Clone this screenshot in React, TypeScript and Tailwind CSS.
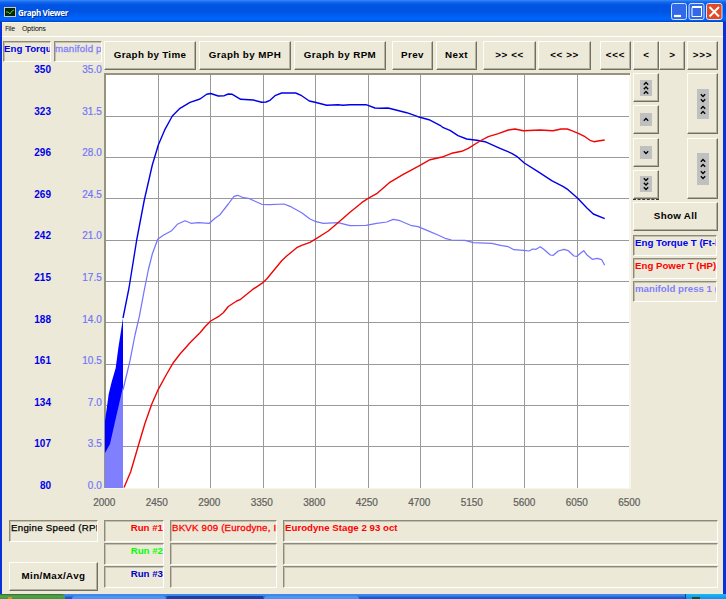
import type { ReactNode } from 'react'
import clsx from 'clsx'

const torqueAxis = ['350', '323', '296', '269', '242', '215', '188', '161', '134', '107', '80']
const pressureAxis = ['35.0', '31.5', '28.0', '24.5', '21.0', '17.5', '14.0', '10.5', '7.0', '3.5', '0.0']
const rpmAxis = ['2000', '2450', '2900', '3350', '3800', '4250', '4700', '5150', '5600', '6050', '6500']

const gridX = [158, 210, 263, 315, 368, 420, 472, 524, 577]
const gridY = [116, 157, 198, 240, 281, 322, 364, 405, 446]

const torque =
  '123,318 129,288 136.7,240 144.3,200 152.3,165 158.3,145 165,129.3 172.3,116 180,108.3 190,102.3 200,99 206.7,94.3 210.7,93.5 218.3,96 224.3,95.7 228.3,94 232.3,94.3 240.7,99.3 253.3,100 261.7,102.3 266,102 270,100.3 275,95.7 281.7,93 295.7,93 301.7,95.7 309.3,101 315,102.3 326.7,105.3 338,104.7 343,105.3 350,104.7 366,104.7 375,108 380.7,108.3 388,108 393,109.3 406.7,112.7 418,116.7 429,119.7 440,125.3 443.3,127.7 450,130.3 458,135.7 466.7,139 476.7,140.3 485,141.7 500,148.3 511.7,153.3 516.7,156.3 524.3,163 538,171.7 551.7,180.7 563.3,186.7 568,189.7 577.7,198.3 586.7,207.7 593.3,214 604.7,218.7'

const power =
  '124,487.5 130.7,471.7 138.3,445.7 145,423.3 151.7,404.3 158.3,389.3 166.7,374 173.3,362.7 180,354 190,342.7 200,332.7 205,326.7 210.7,321 218.3,316.7 223.3,312.7 228.3,306.5 236.7,301 240,299.7 252.3,289.7 263.3,282.3 266.7,279 273.3,271 281.7,260.7 286.7,256 296.7,247.7 301.7,245.3 310,242.3 315,239.3 328.3,231 338,222.7 350,212.3 361.7,202.7 367.7,198.7 376.7,193.7 389.3,182.7 403.3,174.3 420,165.3 430,159.7 443.3,156.7 451.7,153.3 461.7,151.3 468.3,148.3 480,141 488.3,136.7 498.3,133.7 508.3,130 515,129 523.3,130.7 540,130 553,130.7 561,129 567.3,129 571.7,130.7 578.3,133.3 585,136.7 590,140.3 594,141.7 598,141 604.7,140'

const pressure =
  '123,390 130,360.7 135,335 139.3,316.7 144.3,290 148.3,270 152.3,254 157.7,239.3 163.3,235.3 171.7,230.7 177.3,224.3 185,220.7 191,223.3 198.3,222.7 209.3,223.3 215,218.3 220,214.7 228.3,204 234,196.3 237.7,195.3 243.3,197.7 248.3,198.3 256.7,202 261.7,204.3 270,204.7 284,204 290,206.3 301.7,212.7 310,219 315,221.3 323.3,223.3 338,222.7 350,225.7 366,225.3 376.7,223.3 386.7,222 393.3,219.3 400,220.7 411.7,225.7 418,226.7 430,231.7 438,235 445,238.3 451.7,240 465,240.3 473.3,242.7 491.7,243.3 501.7,245.7 508.3,246.7 514,249.7 523.3,250.3 529,251 532.7,249 536,249.3 540.3,246.7 544.3,249.7 550.3,255 553.3,255.3 558.3,251 564,249.3 568.3,250.7 574,256 577,256.3 581,252.7 583.7,250.7 586.7,254.7 592.3,259.3 597.3,258.3 601.7,259.7 604.7,265.3'

function Button({ className, children }: { className: string; children: ReactNode }) {
  return (
    <button
      className={clsx(
        'flex shrink-0 items-center justify-center border border-t-[#fffef5] border-l-[#fffef5] border-r-[#716f64] border-b-[#716f64] bg-[#ece9d8] text-[9.8px] font-bold whitespace-nowrap text-black shadow-[inset_-1px_-1px_0_#b5b19f]',
        className,
      )}
    >
      {children}
    </button>
  )
}

function Field({ className, children }: { className: string; children?: ReactNode }) {
  return (
    <div
      className={clsx(
        'shrink-0 overflow-hidden border border-t-[#8d8a79] border-l-[#8d8a79] border-r-white border-b-white text-[9.7px] leading-[13px] whitespace-nowrap shadow-[inset_1px_1px_0_#c3bfad]',
        className,
      )}
    >
      {children}
    </div>
  )
}

// Stack of small chevrons on a grey plate
function Chevrons({ height, dirs }: { height: number; dirs: string }) {
  const gap = dirs.length === 4 ? 5 : 4.5
  // the four-chevron plates keep a wider gap between the two pairs
  const split = dirs.length === 4 ? 2 : 0
  const top = height / 2 - ((dirs.length - 1) * gap + split) / 2
  return (
    <svg width="12" height={height} className="bg-[#c0c0c0]" fill="none" stroke="black" strokeWidth="1.3">
      {dirs.split('').map((dir, i) => {
        const y = top + i * gap + (i > 1 ? split : 0)
        return <path key={i} d={dir === 'u' ? `M3.8 ${y + 1.2}L6 ${y - 1}L8.2 ${y + 1.2}` : `M3.8 ${y - 1.2}L6 ${y + 1}L8.2 ${y - 1.2}`} />
      })}
    </svg>
  )
}

function Chart() {
  return (
    <svg width="527" height="416" viewBox="104 73 527 416" className="shrink-0">
      <rect x="104" y="73" width="527" height="416" fill="#f7f5ec" />
      <path d="M104 73H630V75H106V488H104Z" fill="#96937f" />
      <rect x="106" y="75" width="523" height="413" fill="white" />
      <g stroke="#999" strokeWidth="1" shapeRendering="crispEdges">
        {gridX.map((x) => (
          <path key={x} d={`M${x + 0.5} 75V488`} />
        ))}
        {gridY.map((y) => (
          <path key={y} d={`M106 ${y + 0.5}H629`} />
        ))}
      </g>
      <path d="M105 488V421L108.7 394L111.7 381.7L115.7 368L118.3 348.3L123 318V488Z" fill="#0000ff" />
      <path d="M105 488V453L110 444L115 421.7L120 400L123 387V488Z" fill="#8080ff" />
      <g fill="none" strokeLinejoin="round">
        <polyline points={pressure} stroke="#7474ff" strokeWidth="1.25" />
        <polyline points={torque} stroke="#0000e8" strokeWidth="1.4" />
        <polyline points={power} stroke="#f00505" strokeWidth="1.4" />
      </g>
    </svg>
  )
}

function TitleBar() {
  return (
    <div className="flex h-[22px] shrink-0 items-center bg-[linear-gradient(#3a8cf4_0px,#1468f0_2px,#0054e3_5px,#0054e3_12px,#0064fc_18px,#0064fc_20px,#0040b8_22px)] pr-[3px] pl-1">
      <svg width="12" height="10" viewBox="0 0 12 10" className="mt-[2px] shrink-0">
        <rect width="12" height="10" fill="#c8c8c0" />
        <rect x="1" y="1" width="10" height="8" fill="#052505" />
        <path d="M2 5H4L6 7L8 4L10 3" stroke="#40d050" fill="none" />
      </svg>
      <span className="mt-[3px] ml-[2px] font-['Open_Sans'] text-[8px] font-bold tracking-[-0.35px] text-white [text-shadow:1px_1px_0_#003090]">
        Graph Viewer
      </span>
      <svg width="52" height="17" viewBox="0 0 52 17" className="mt-px ml-auto">
        <g stroke="#d5e4ff" strokeWidth="1">
          <rect x="0.5" y="0.5" width="15" height="16" rx="2" fill="#3269e8" />
          <rect x="18" y="0.5" width="15" height="16" rx="2" fill="#3269e8" />
          <rect x="35.5" y="0.5" width="15.5" height="16" rx="2" fill="#e24a24" />
        </g>
        <path d="M3 13H10" stroke="white" strokeWidth="2.2" />
        <path d="M21 4.5H30.5V13.5H21Z" fill="none" stroke="white" />
        <path d="M21 4H31" stroke="white" strokeWidth="2" />
        <path d="M38.5 4L48 13.5M48 4L38.5 13.5" stroke="white" strokeWidth="2" />
      </svg>
    </div>
  )
}

function Taskbar() {
  return (
    <div className="flex h-[5px] shrink-0 bg-[linear-gradient(#3a80e8_0px,#4690f0_1px,#2462dc_3px,#1a4fc4_5px)]">
      <div className="w-[65px] rounded-tr bg-[linear-gradient(#2c6b2c,#55a34f_2px,#3c9838)]">
        <div className="ml-2 h-full w-1 pt-[3px]">
          <div className="h-[2px] bg-[#e88a28]" />
        </div>
      </div>
      <div className="mt-[2px] ml-[7px] w-[94px] rounded-t-sm bg-[#4b94f4]" />
      <div className="mt-[2px] ml-px w-[96px] bg-[#1743a4]" />
      <div className="mt-[2px] ml-px w-[95px] rounded-t-sm bg-[#4b94f4]" />
      <div className="ml-auto w-[41px] border-l border-[#0b3d91] bg-[linear-gradient(#19b9f3,#1290e9)]">
        <div className="mt-[3px] ml-[6px] h-[2px] w-2 bg-[#154d40]" />
      </div>
    </div>
  )
}

export default function App() {
  return (
    <div className="flex h-[599px] w-[726px] flex-col overflow-hidden bg-[#ece9d8] font-['Liberation_Sans',sans-serif]">
      <TitleBar />
      <div className="flex min-h-0 flex-1 flex-col border-r-[3px] border-l-2 border-[#0831d9] shadow-[inset_0_1px_0_#f8f4e4]">
        <div className="flex h-[15px] shrink-0 gap-[7px] border-b border-white pl-[3px] font-['Open_Sans'] text-[7px] leading-[14px] tracking-[-0.3px] text-black">
          <span>File</span>
          <span>Options</span>
        </div>

        <div className="flex h-[452px] shrink-0">
          {/* Value axes */}
          <div className="flex w-[102px] shrink-0 gap-[3px] pt-1 pl-px">
            <div className="w-12">
              <Field className="h-[21px] w-12 font-bold text-[#0000e8]">Eng Torque T</Field>
              <div className="text-right text-[10px] font-bold text-[#0000e8]">
                {torqueAxis.map((v) => (
                  <div key={v} className="h-[41.6px] leading-[16px]">{v}</div>
                ))}
              </div>
            </div>
            <div className="w-12">
              <Field className="h-[21px] w-12 tracking-[0.2px] text-[#8080ff] [-webkit-text-stroke:0.3px]">manifold press</Field>
              <div className="text-right text-[10px] tracking-[0.1px] text-[#7474f8]">
                {pressureAxis.map((v) => (
                  <div key={v} className="h-[41.6px] leading-[16px] [-webkit-text-stroke:0.2px]">{v}</div>
                ))}
              </div>
            </div>
          </div>

          <div className="pt-1">
            {/* Toolbar */}
            <div className="flex h-[29px]">
              <Button className="w-[92px] tracking-[0.3px]">Graph by Time</Button>
              <Button className="ml-[3px] w-[92px] tracking-[0.4px]">Graph by MPH</Button>
              <Button className="ml-[3px] w-[92px] tracking-[0.4px]">Graph by RPM</Button>
              <Button className="ml-[6px] w-[41px] tracking-[0.4px]">Prev</Button>
              <Button className="ml-[3px] w-[41px] tracking-[0.4px]">Next</Button>
              <Button className="ml-[6px] w-[53px] tracking-[0.6px]">{'>> <<'}</Button>
              <Button className="ml-[2px] w-[53px] tracking-[0.6px]">{'<< >>'}</Button>
              <Button className="ml-[9px] w-[31px] tracking-[0.7px]">{'<<<'}</Button>
              <Button className="ml-[2px] w-[26px]">{'<'}</Button>
              <Button className="w-[26px]">{'>'}</Button>
              <Button className="ml-[2px] w-[31px] tracking-[0.7px]">{'>>>'}</Button>
            </div>

            <div className="mt-[3px] flex">
              <Chart />
              <div className="ml-[2px] flex w-[85px] flex-col">
                <div className="flex justify-between">
                  <div className="flex h-[127px] flex-col justify-between border-b border-dashed border-[#333]">
                    <Button className="h-[29px] w-[26px]"><Chevrons height={16} dirs="uuu" /></Button>
                    <Button className="h-[29px] w-[26px]"><Chevrons height={13} dirs="u" /></Button>
                    <Button className="h-[29px] w-[26px]"><Chevrons height={13} dirs="d" /></Button>
                    <Button className="h-[29px] w-[26px]"><Chevrons height={16} dirs="ddd" /></Button>
                  </div>
                  <div className="flex h-[126px] flex-col justify-between">
                    <Button className="h-[61px] w-[31px]"><Chevrons height={30} dirs="dduu" /></Button>
                    <Button className="h-[61px] w-[31px]"><Chevrons height={32} dirs="uudd" /></Button>
                  </div>
                </div>
                <Button className="mt-[2px] h-[29px] w-[85px] tracking-[0.3px]">Show All</Button>
                <Field className="mt-[4px] h-[21px] w-[84px] pl-px font-bold text-[#0000f0]">Eng Torque T (Ft-lbs)</Field>
                <Field className="mt-[2px] h-[21px] w-[84px] pl-px font-bold text-[#ff0000]">Eng Power T (HP)</Field>
                <Field className="mt-[2px] h-[21px] w-[84px] pl-px font-bold text-[#8080ff]">manifold press 1 (psi)</Field>
              </div>
            </div>
          </div>
        </div>

        {/* Engine speed axis */}
        <div className="flex h-[31px] shrink-0 pt-[6px] pl-[76px] text-[10px] leading-[15px] text-[#606060]">
          {rpmAxis.map((v) => (
            <span key={v} className="w-[52.5px] shrink-0 text-center [-webkit-text-stroke:0.2px]">{v}</span>
          ))}
        </div>

        {/* Run details */}
        <div className="flex h-[74px] shrink-0 pl-[7px]">
          <div className="flex h-[71px] flex-col justify-between">
            <Field className="h-[22px] w-[89px] pl-px tracking-[0.28px] text-black [-webkit-text-stroke:0.25px]">Engine Speed (RPM)</Field>
            <Button className="h-[29px] w-[89px] tracking-[0.4px]">Min/Max/Avg</Button>
          </div>
          <div className="ml-[6px] flex flex-col gap-px text-right font-bold">
            <Field className="h-[22px] w-[60px] text-[#ff0000]">Run #1</Field>
            <Field className="h-[22px] w-[60px] text-[#00ff00]">Run #2</Field>
            <Field className="h-[22px] w-[60px] text-[#0000c8]">Run #3</Field>
          </div>
          <div className="ml-[6px] flex flex-col gap-px">
            <Field className="h-[22px] w-[107px] pl-px tracking-[0.2px] text-[#ff0000] [-webkit-text-stroke:0.3px]">BKVK 909 (Eurodyne, Inc)</Field>
            <Field className="h-[22px] w-[107px]" />
            <Field className="h-[22px] w-[107px]" />
          </div>
          <div className="ml-[6px] flex flex-col gap-px">
            <Field className="h-[22px] w-[435px] pl-px font-bold text-[#ff0000]">Eurodyne Stage 2 93 oct</Field>
            <Field className="h-[22px] w-[435px]" />
            <Field className="h-[22px] w-[435px]" />
          </div>
        </div>
      </div>
      <Taskbar />
    </div>
  )
}
